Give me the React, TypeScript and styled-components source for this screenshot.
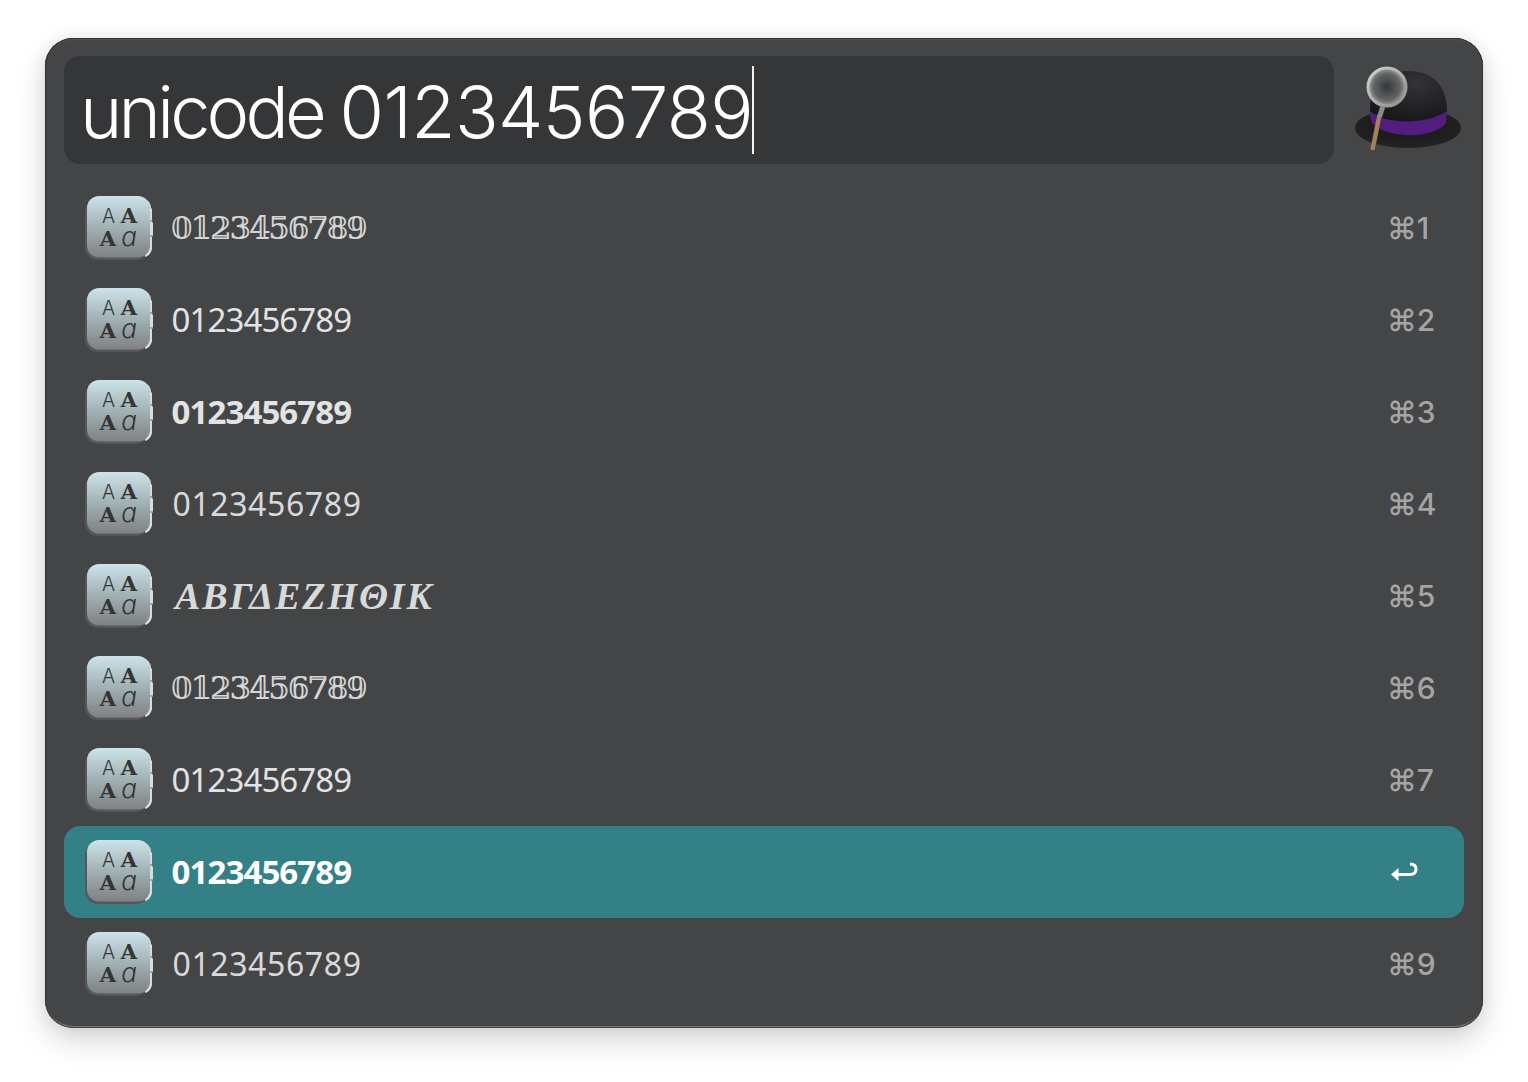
import React from "react";
import styled, { createGlobalStyle } from "styled-components";

const GlobalStyle = createGlobalStyle`
  html, body {
    margin: 0;
    padding: 0;
    background: #fff;
  }
`;

const Page = styled.div`
  width: 1528px;
  height: 1082px;
  padding: 38px 45px 0;
  box-sizing: border-box;
  overflow: hidden;
`;

const Panel = styled.div`
  width: 1438px;
  height: 990px;
  box-sizing: border-box;
  padding: 18px 19px;
  border-radius: 28px;
  background: #444547;
  box-shadow: inset 0 0 0 1px rgba(35, 35, 35, 0.7), inset 0 2px 0 #505153,
    inset 0 -2px 0 #77787a, 0 12px 30px rgba(0, 0, 0, 0.17),
    0 0 16px rgba(0, 0, 0, 0.07);
`;

const SearchRow = styled.div`
  display: flex;
  align-items: center;
  gap: 16px;
  height: 108px;
`;

const SearchField = styled.div`
  flex: 1;
  height: 108px;
  display: flex;
  align-items: center;
  padding-left: 16px;
  border-radius: 16px;
  background: #353638;
`;

const Query = styled.span`
  font-family: Inter, "Liberation Sans", sans-serif;
  font-size: 72px;
  font-weight: 300;
  letter-spacing: -3.8px;
  line-height: 88px;
  margin-top: 4px;
  color: #fff;
  white-space: nowrap;
`;

const QueryDigits = styled.span`
  letter-spacing: -0.5px;
`;

const Caret = styled.span`
  width: 2px;
  height: 88px;
  margin-left: -1px;
  background: #f2f2f2;
`;

const Results = styled.div`
  margin-top: 18px;
  display: flex;
  flex-direction: column;
`;

const Row = styled.div<{ $selected?: boolean }>`
  height: 92px;
  display: flex;
  align-items: center;
  padding-left: 21px;
  border-radius: 16px;
  background: ${(p) => (p.$selected ? "#338087" : "transparent")};
`;

const Title = styled.span<{ $kind: Kind; $selected?: boolean }>`
  flex: 1;
  margin-left: 18px;
  white-space: nowrap;
  color: ${(p) => (p.$selected ? "#fff" : "#e2e3e3")};
  ${(p) => {
    switch (p.$kind) {
      case "struck":
        return `font-family: "DejaVu Serif", serif; font-size: 31px; letter-spacing: -2.1px; color: #d4d5d5;`;
      case "bold":
        return `font-family: "Noto Sans", sans-serif; font-size: 33px; font-weight: 700; letter-spacing: -0.9px; margin-bottom: 2px; margin-left: 18.5px;`;
      case "mono":
        return `font-family: "Noto Sans", sans-serif; font-size: 32px; letter-spacing: 0.6px; margin-left: 19.5px; margin-bottom: 2px; color: #d8d9d9;`;
      case "greek":
        return `font-family: "Liberation Serif", serif; font-size: 38px; font-weight: 700; font-style: italic; letter-spacing: 1.9px; margin-left: 22px; color: #d8d9d9;`;
      default:
        return `font-family: "Noto Sans", sans-serif; font-size: 33px; letter-spacing: -0.9px; margin-bottom: 2px; margin-left: 18.5px;`;
    }
  }}
`;

const Shortcut = styled.span`
  width: 77px;
  font-family: Inter, "DejaVu Sans", sans-serif;
  font-size: 30px;
  font-weight: 500;
  color: #a3a4a5;
  white-space: nowrap;
`;

const ReturnSlot = styled.span`
  width: 74px;
  display: flex;
  align-items: center;
`;

const IconSvg = styled.svg`
  flex: none;
  margin-top: 2px;
`;

type Kind = "struck" | "sans" | "bold" | "mono" | "greek";

const FontBookIcon: React.FC<{ id: string }> = ({ id }) => (
  <IconSvg width="68" height="66" viewBox="0 0 68 66">
    <defs>
      <linearGradient id={`page-${id}`} x1="0" y1="0" x2="0" y2="1">
        <stop offset="0" stopColor="#cde3e9" />
        <stop offset="0.45" stopColor="#a5b7ba" />
        <stop offset="1" stopColor="#7f8183" />
      </linearGradient>
    </defs>
    <rect x="0" y="3" width="64" height="61" rx="13" fill="#55575a" />
    <path
      d="M61 4 C64 5 66 8 66 12 L67 13 L67 26 L68 27 L68 40 L67 41 L67 53 C66 57 64 60 60 61Z"
      fill="#d9dcdc"
    />
    <path d="M63 25 H68 M63 40 H68" stroke="#6d6f70" strokeWidth="1" />
    <rect x="2" y="0" width="63" height="61.5" rx="12" fill={`url(#page-${id})`} />
    <g fill="#353535" textAnchor="middle">
      <text x="23.5" y="27" fontFamily="Inter, sans-serif" fontWeight="300" fontSize="19.5">
        A
      </text>
      <text x="44" y="27" fontFamily="'DejaVu Serif', serif" fontSize="21" fontWeight="700">
        A
      </text>
      <text x="23" y="50" fontFamily="'DejaVu Serif', serif" fontSize="21" fontWeight="700">
        A
      </text>
      <text x="44" y="50" fontFamily="Inter, sans-serif" fontSize="26" fontStyle="italic" fontWeight="300">
        ɑ
      </text>
    </g>
  </IconSvg>
);

const HatLogo = () => (
  <svg width="114" height="90" viewBox="0 0 114 90">
    <defs>
      <radialGradient id="crown" cx="0.6" cy="0.25" r="0.8">
        <stop offset="0" stopColor="#333234" />
        <stop offset="1" stopColor="#161517" />
      </radialGradient>
      <radialGradient id="lens" cx="0.5" cy="0.5" r="0.5">
        <stop offset="0" stopColor="#353637" />
        <stop offset="0.7" stopColor="#636466" />
        <stop offset="1" stopColor="#a0a1a2" />
      </radialGradient>
      <linearGradient id="ring" x1="0" y1="0" x2="1" y2="1">
        <stop offset="0" stopColor="#d2d3d3" />
        <stop offset="1" stopColor="#8c8d8e" />
      </linearGradient>
      <radialGradient id="brim" cx="0.5" cy="0.4" r="0.6">
        <stop offset="0" stopColor="#151415" />
        <stop offset="1" stopColor="#242324" />
      </radialGradient>
    </defs>
    <ellipse cx="58" cy="63" rx="53" ry="20" fill="url(#brim)" />
    <path
      d="M20 46 C20 20 32 6 58 6 C86 6 97 24 97 47 C97 60 20 60 20 46Z"
      fill="url(#crown)"
    />
    <path
      d="M20 46 C36 60 76 60 97 46 L96 58 C84 74 40 74 24 60 C21 57 20 52 20 46Z"
      fill="#521d7e"
    />
    <path d="M31 50 L24 86" stroke="#2c2b2c" strokeWidth="2" />
    <path d="M29.5 50 L22.5 85" stroke="#a5805f" strokeWidth="4.4" />
    <circle cx="37" cy="22" r="19" fill="url(#lens)" stroke="url(#ring)" strokeWidth="3" />
    <path d="M33 41 L29.5 52" stroke="#8a8b8c" strokeWidth="5" />
  </svg>
);

const ReturnIcon = () => (
  <svg width="30" height="24" viewBox="0 0 30 24">
    <path d="M1 14.5 L8.5 8 V21Z" fill="#fff" />
    <path
      d="M7 14.5 H20 C24.5 14.5 26 12 26 9 C26 6 24 4 20 4"
      fill="none"
      stroke="#fff"
      strokeWidth="3"
    />
  </svg>
);

const results: { text: string; kind: Kind; key: string; selected?: boolean }[] = [
  { text: "𝟘𝟙𝟚𝟛𝟜𝟝𝟞𝟟𝟠𝟡", kind: "struck", key: "⌘1" },
  { text: "0123456789", kind: "sans", key: "⌘2" },
  { text: "0123456789", kind: "bold", key: "⌘3" },
  { text: "0123456789", kind: "mono", key: "⌘4" },
  { text: "ΑΒΓΔΕΖΗΘΙΚ", kind: "greek", key: "⌘5" },
  { text: "𝟘𝟙𝟚𝟛𝟜𝟝𝟞𝟟𝟠𝟡", kind: "struck", key: "⌘6" },
  { text: "0123456789", kind: "sans", key: "⌘7" },
  { text: "0123456789", kind: "bold", key: "", selected: true },
  { text: "0123456789", kind: "mono", key: "⌘9" },
];

export default function App() {
  return (
    <Page>
      <GlobalStyle />
      <Panel>
        <SearchRow>
          <SearchField>
            <Query>
              unicode <QueryDigits>0123456789</QueryDigits>
            </Query>
            <Caret />
          </SearchField>
          <HatLogo />
        </SearchRow>
        <Results>
          {results.map((r, i) => (
            <Row key={i} $selected={r.selected}>
              <FontBookIcon id={String(i)} />
              <Title $kind={r.kind} $selected={r.selected}>
                {r.text}
              </Title>
              {r.selected ? (
                <ReturnSlot>
                  <ReturnIcon />
                </ReturnSlot>
              ) : (
                <Shortcut>{r.key}</Shortcut>
              )}
            </Row>
          ))}
        </Results>
      </Panel>
    </Page>
  );
}
